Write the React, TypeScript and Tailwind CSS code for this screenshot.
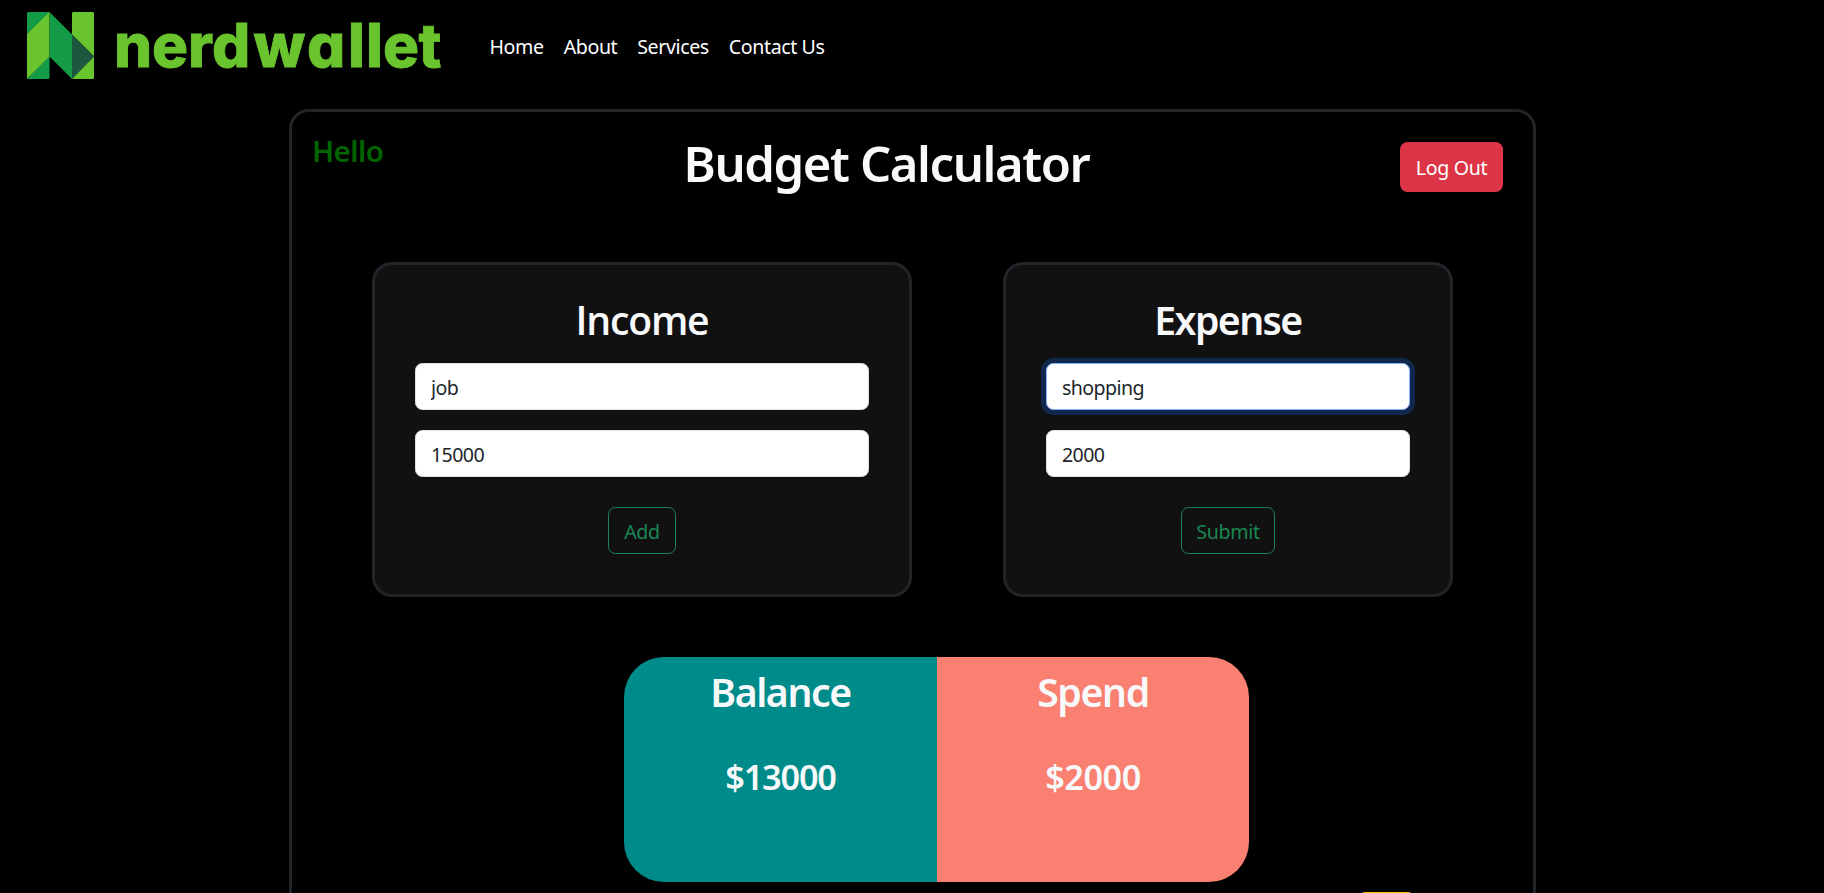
import React from 'react';

function Logo() {
  return (
    <svg width="420" height="84" viewBox="0 -6 420 84" className="block shrink-0" role="img" aria-label="nerdwallet">
      <path d="M1 0h21.5v1L0 22V1z" fill="#149B48" />
      <path d="M22.5 0v45L0 67V22z" fill="#6AC42E" />
      <path d="M22.5 44.5V66l-1 1H0z" fill="#149B48" />
      <path d="M46 0h20l1 1v43.5L45 22.5V1z" fill="#6AC42E" />
      <path d="M22.500 0L45 22.500V67L22.500 44.500z" fill="#149B48" />
      <path d="M45 22.500L67 44.500L45 67z" fill="#1C5840" />
      <path d="M67 44.500V66l-1 1H45z" fill="#6AC42E" />
      <text
        x="86.9 124.9 160.9 184.9 226.600 279.9 320.900 338.900 355.9 391.6"
        y="55.200"
        fill="#6AC42E"
        stroke="#6AC42E"
        strokeWidth="0.8"
        className="font-['Inter',sans-serif] text-[60px] font-extrabold [font-feature-settings:'cv11']"
      >
        nerdwallet
      </text>
    </svg>
  );
}

const field =
  'block h-[47px] w-full rounded-[7.5px] border bg-white px-[15px] pt-px text-[19.6px] tracking-[-0.6px] text-[#212529] outline-none';

function EntryCard({
  title,
  titleClass,
  name,
  amount,
  action,
  focused = false,
  width,
}: {
  title: string;
  titleClass: string;
  name: string;
  amount: string;
  action: string;
  focused?: boolean;
  width: string;
}) {
  return (
    <section
      className={`flex h-[335px] flex-col items-center rounded-[20px] border-[3px] border-[#212529] bg-[#111111] px-10 pt-[31px] ${width}`}
    >
      <h2 className={`mb-[19px] text-[39.2px] leading-[48px] font-semibold text-[#f8f9fa] ${titleClass}`}>{title}</h2>
      <input
        readOnly
        defaultValue={name}
        className={`${field} ${focused ? 'border-[#86b7fe] ring-[5px] ring-[#0d6efd]/25' : 'border-[#dee2e6]'}`}
      />
      <input readOnly defaultValue={amount} className={`${field} mt-5 border-[#dee2e6]`} />
      <button
        className={`mt-[30px] h-[47px] rounded-[7.5px] border border-[#198754] pt-0.5 text-[19.6px] tracking-[-0.3px] text-[#198754] ${action === 'Add' ? 'w-[68px]' : 'w-[94px]'}`}
      >
        {action}
      </button>
    </section>
  );
}

function Total({
  label,
  value,
  className,
  valueClass,
}: {
  label: string;
  value: string;
  className: string;
  valueClass: string;
}) {
  return (
    <div className={`h-[225px] pt-[11px] text-center font-semibold text-[#f8f9fa] ${className}`}>
      <h2 className="text-[39.2px] leading-[48px] tracking-[-1.4px]">{label}</h2>
      <p className={`mt-[40px] text-[34.3px] leading-[42px] ${valueClass}`}>{value}</p>
    </div>
  );
}

export default function App() {
  return (
    <div className="h-[893px] w-full overflow-hidden bg-black font-['Noto_Sans',sans-serif]">
      <header className="flex h-[109px] items-start pt-[6px] pl-[27px]">
        <Logo />
        <nav className="mt-[26px] ml-[42.500px] flex gap-5 text-[19.6px] leading-[30px] tracking-[-0.4px] text-white">
          <a>Home</a>
          <a>About</a>
          <a>Services</a>
          <a>Contact Us</a>
        </nav>
      </header>

      <main className="ml-[289px] h-[1000px] w-[1247px] rounded-[20px] border-[3px] border-[#212529]">
        <div className="flex h-[150px] items-start pr-[30px] pl-5">
          <h4 className="mt-[21px] w-[100px] text-[29.4px] leading-9 font-semibold tracking-[-0.6px] text-[#006400]">Hello</h4>
          <h1 className="mt-[21px] flex-1 pr-[3px] text-center text-[49px] leading-[60px] font-semibold tracking-[-1.4px] text-[#f8f9fa]">
            Budget Calculator
          </h1>
          <button className="mt-[30px] ml-9 h-[50px] w-[103px] rounded-[7.5px] bg-[#dc3545] pt-0.5 text-[19.6px] tracking-[-0.3px] text-white">
            Log Out
          </button>
        </div>

        <div className="ml-20 flex gap-[91px]">
          <EntryCard
            title="Income"
            titleClass="font-['Open_Sans',sans-serif] tracking-[-1.2px]"
            name="job"
            amount="15000"
            action="Add"
            width="w-[540px]"
          />
          <EntryCard
            title="Expense"
            titleClass="tracking-[-1.6px]"
            name="shopping"
            amount="2000"
            action="Submit"
            focused
            width="w-[450px]"
          />
        </div>

        <div className="mt-[60px] ml-[332px] flex">
          <Total
            label="Balance"
            value="$13000"
            className="w-[313px] rounded-l-[40px] bg-[#008b8b]"
            valueClass="tracking-[-1.2px]"
          />
          <Total
            label="Spend"
            value="$2000"
            className="w-[312px] rounded-r-[40px] bg-[#fa8072]"
            valueClass="tracking-[-0.5px]"
          />
        </div>

        <div className="mt-[10px] ml-[1066px] h-[47px] w-[57px] rounded-[7.5px] bg-[#ffc107]" />
      </main>
    </div>
  );
}
